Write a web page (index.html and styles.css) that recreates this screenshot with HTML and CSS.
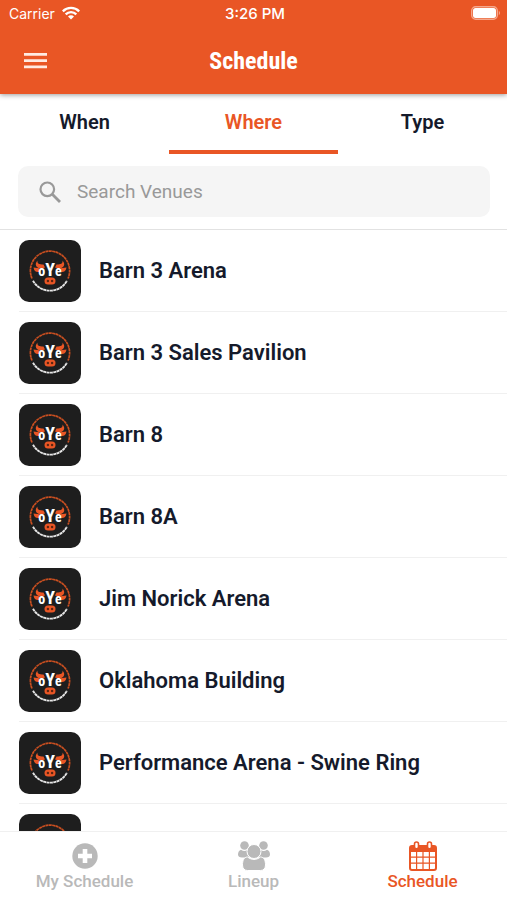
FILE: index.html
```html
<!DOCTYPE html>
<html lang="en">
<head>
  <meta charset="UTF-8">
  <meta name="viewport" content="width=device-width, initial-scale=1.0">
  <title>Schedule</title>
  <link rel="stylesheet" href="styles.css">
</head>
<body>
  <header class="header">
    <div class="status-bar">
      <div class="carrier">
        <span>Carrier</span>
        <svg width="18" height="14" viewBox="0 0 18 14" fill="none" stroke="#fff" stroke-width="2.4">
          <path d="M.8 5.300a11.600 11.600 0 0 1 16.400 0M3.700 8.300a7.500 7.500 0 0 1 10.600 0"/>
          <path d="M9 13.500l-3-3a4.200 4.200 0 0 1 6 0z" fill="#fff" stroke="none"/>
        </svg>
      </div>
      <div class="time">3:26 PM</div>
      <svg class="battery" width="30" height="14" viewBox="0 0 30 14">
        <rect x=".7" y=".7" width="25.6" height="12.6" rx="4" fill="none" stroke="#f5a78c" stroke-width="1.4"/>
        <rect x="2" y="2" width="23" height="10" rx="2.5" fill="#fff"/>
        <path d="M27.800 4.800a2.600 2.600 0 0 1 0 4.400z" fill="#f5a78c"/>
      </svg>
    </div>
    <div class="title-bar">
      <button class="menu-button" type="button" aria-label="Menu">
        <svg width="24" height="16" viewBox="0 0 24 16" fill="#ffeae2">
          <path d="M0 0h23v2.700H0zM0 6.300h23V9H0zM0 12.600h23v2.700H0z"/>
        </svg>
      </button>
      <h1>Schedule</h1>
    </div>
  </header>

  <div class="tabs">
    <button class="tab" type="button">When</button>
    <button class="tab active" type="button">Where</button>
    <button class="tab" type="button">Type</button>
  </div>

  <div class="search">
    <label class="search-box">
      <svg width="22" height="22" viewBox="0 0 22 22" fill="none" stroke="#999">
        <circle cx="8.300" cy="8.300" r="6.800" stroke-width="2.2"/>
        <path d="M13.300 13.300l7.700 7.700" stroke-width="2.8"/>
      </svg>
      <input type="text" placeholder="Search Venues" aria-label="Search Venues">
    </label>
  </div>

  <main class="venues">
    <ul>
      <li>
        <a href="#">
          <!-- The other rows reuse this logo -->
          <svg class="logo">
            <g id="oye">
              <path d="M13 38.500A19.600 19.600 0 1 1 49 38.500" fill="none" stroke="#c94f20" stroke-width="1.7" stroke-dasharray="3 .4"/>
              <path d="M14 40.800A19.600 19.600 0 0 0 48 40.800" fill="none" stroke="#e6e6e6" stroke-width="1.9" stroke-dasharray="3 .4"/>
              <path d="M18.500 20.500c-.5 3 1.500 4 6 4l1.500 3-3 1c-5 0-8.500-3.500-4.500-8zM43.500 20.500c.5 3-1.500 4-6 4l-1.500 3 3 1c5 0 8.500-3.500 4.500-8z" fill="#e95625"/>
              <path d="M14.500 27.500l6 .7-.5 3.800c-3 .5-5-1.200-5.500-4.500zM47.500 27.500l-6 .7.5 3.800c3 .5 5-1.200 5.500-4.500z" fill="#e95625"/>
              <text x="31" y="36" text-anchor="middle" class="oye-text">o<tspan class="oye-big">Y</tspan>e</text>
              <rect x="25.500" y="37.500" width="11" height="7" rx="3.500" fill="#e95625"/>
              <circle cx="28.900" cy="41" r="1.200" fill="#5c2410"/>
              <circle cx="33.100" cy="41" r="1.200" fill="#5c2410"/>
            </g>
          </svg>
          <span>Barn 3 Arena</span>
        </a>
      </li>
      <li><a href="#"><svg class="logo"><use href="#oye"/></svg><span>Barn 3 Sales Pavilion</span></a></li>
      <li><a href="#"><svg class="logo"><use href="#oye"/></svg><span>Barn 8</span></a></li>
      <li><a href="#"><svg class="logo"><use href="#oye"/></svg><span>Barn 8A</span></a></li>
      <li><a href="#"><svg class="logo"><use href="#oye"/></svg><span>Jim Norick Arena</span></a></li>
      <li><a href="#"><svg class="logo"><use href="#oye"/></svg><span>Oklahoma Building</span></a></li>
      <li><a href="#"><svg class="logo"><use href="#oye"/></svg><span>Performance Arena - Swine Ring</span></a></li>
      <li><a href="#"><svg class="logo"><use href="#oye"/></svg></a></li>
    </ul>
  </main>

  <nav class="bottom-nav">
    <a href="#">
      <svg width="32" height="30" viewBox="0 0 32 30">
        <circle cx="16" cy="15" r="12.700" fill="#b9b9b9"/>
        <path d="M13.700 8h4.600v4.700H23v4.600h-4.700V22h-4.600v-4.700H9v-4.600h4.700z" fill="#fff"/>
      </svg>
      <span>My Schedule</span>
    </a>
    <a href="#">
      <svg width="32" height="30" viewBox="0 0 32 30" fill="#b9b9b9">
        <circle cx="6.500" cy="4.500" r="4.300"/>
        <circle cx="25.500" cy="4.500" r="4.300"/>
        <path d="M3 8.800q3.500 2.400 6.500 0c-1 4 .5 6 2 7.700H4C1.500 16.500 0 15.500 0 13.500c0-2 1-4.200 3-4.700zM29 8.800q-3.500 2.400-6.500 0c1 4-.5 6-2 7.700H28c2.500 0 4-1 4-3 0-2-1-4.200-3-4.700z"/>
        <path d="M9.500 16c4 3.200 9 3.200 13 0 3.500 0 5 3.500 5 8 0 3.500-2 5.500-5 5.500h-13c-3 0-5-2-5-5.500 0-4.500 1.500-8 5-8z" stroke="#fff" stroke-width="1"/>
        <circle cx="16" cy="10.500" r="7" stroke="#fff" stroke-width="1"/>
      </svg>
      <span>Lineup</span>
    </a>
    <a href="#" class="active">
      <svg width="32" height="30" viewBox="0 0 32 30">
        <path fill-rule="evenodd" fill="#e95625" d="M5 4h22a3 3 0 0 1 3 3v20a3 3 0 0 1-3 3H5a3 3 0 0 1-3-3V7a3 3 0 0 1 3-3zM4 11h5v4.500H4zM10.200 11h5.200v4.500h-5.200zM16.600 11h5.200v4.500h-5.200zM23 11h5v4.500h-5zM4 16.700h5v4.800H4zM10.200 16.700h5.200v4.800h-5.200zM16.600 16.700h5.200v4.800h-5.200zM23 16.700h5v4.800h-5zM4 22.700h5v5.300H5a1 1 0 0 1-1-1zM10.200 22.700h5.200V28h-5.200zM16.600 22.700h5.200V28h-5.200zM23 22.700h5V27a1 1 0 0 1-1 1h-4z"/>
        <rect x="7.500" y="1" width="4" height="6.800" rx="2" fill="#fff" stroke="#e95625" stroke-width="1.6"/>
        <rect x="20.500" y="1" width="4" height="6.800" rx="2" fill="#fff" stroke="#e95625" stroke-width="1.6"/>
      </svg>
      <span>Schedule</span>
    </a>
  </nav>
</body>
</html>
```
FILE: styles.css
```css
* {
  box-sizing: border-box;
  margin: 0;
  padding: 0;
}

body {
  display: flex;
  flex-direction: column;
  height: 100vh;
  font-family: 'Roboto', sans-serif;
  color: #151a2b;
  background: #fff;
}

a {
  text-decoration: none;
  color: inherit;
}

button,
input {
  font-family: inherit;
  color: inherit;
  background: none;
  border: none;
}

button {
  cursor: pointer;
}

/* Header */
.header {
  color: #fff;
  background: #e95625;
  box-shadow: 0 1px 5px rgba(0, 0, 0, 0.4);
}

.status-bar {
  display: grid;
  grid-template-columns: 1fr auto 1fr;
  align-items: center;
  height: 28px;
  padding: 0 6px 2px 9px;
  font-family: 'Inter', sans-serif;
  font-size: 14px;
}

.carrier {
  display: flex;
  align-items: center;
  gap: 7px;
}

.time {
  font-size: 15px;
  font-weight: 500;
}

.battery {
  justify-self: end;
}

.title-bar {
  display: grid;
  grid-template-columns: 1fr auto 1fr;
  align-items: center;
  height: 66px;
  padding: 0 24px;
}

.menu-button {
  display: flex;
  justify-self: start;
}

.title-bar h1 {
  font-family: 'Roboto Condensed', 'Roboto', sans-serif;
  font-size: 24px;
  font-weight: 700;
}

/* Tabs */
.tabs {
  display: flex;
}

.tab {
  flex: 1;
  height: 60px;
  font-size: 20px;
  font-weight: 600;
  border-bottom: 4px solid transparent;
}

.tab.active {
  color: #e95625;
  border-color: #e95625;
}

/* Search */
.search {
  padding: 12px 17px 12px 18px;
  border-bottom: 1px solid #e2e2e2;
}

.search-box {
  display: flex;
  align-items: center;
  gap: 16px;
  height: 51px;
  padding: 0 21px;
  background: #f5f5f5;
  border-radius: 10px;
}

.search-box input {
  flex: 1;
  min-width: 0;
  font-size: 19px;
  outline: none;
}

.search-box input::placeholder {
  color: #999;
}

/* Venue list */
.venues {
  flex: 1;
  min-height: 0;
  overflow-y: auto;
  scrollbar-width: none;
}

.venues ul {
  list-style: none;
}

.venues li {
  margin-left: 19px;
  border-bottom: 1px solid #f0f0f0;
}

.venues a {
  display: flex;
  align-items: center;
  gap: 18px;
  height: 81px;
  font-size: 22px;
  font-weight: 600;
}

.logo {
  width: 62px;
  height: 62px;
  background: #1e1e1e;
  border-radius: 10px;
}

.oye-text {
  font-family: 'Roboto Condensed', 'Roboto', sans-serif;
  font-size: 14px;
  font-weight: 700;
  fill: #fff;
}

.oye-big {
  font-size: 18px;
}

/* Bottom navigation */
.bottom-nav {
  display: flex;
  height: 69px;
  border-top: 1px solid #f0f0f0;
}

.bottom-nav a {
  flex: 1;
  display: flex;
  flex-direction: column;
  align-items: center;
  padding-top: 9px;
  font-size: 17px;
  font-weight: 500;
  line-height: 20px;
  color: #b9b9b9;
}

.bottom-nav .active {
  color: #e95625;
}
```
